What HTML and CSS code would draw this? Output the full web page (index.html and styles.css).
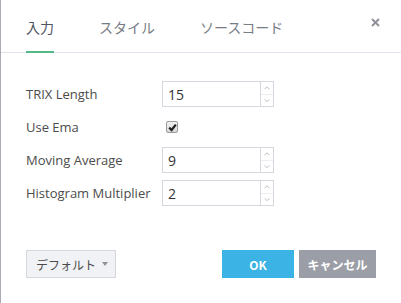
FILE: index.html
```html
<!DOCTYPE html>
<html lang="ja">
<head>
  <meta charset="UTF-8" />
  <meta name="viewport" content="width=device-width, initial-scale=1.0"/>
  <title>TRIX</title>
  <link rel="stylesheet" href="styles.css">
</head>
<body>

<div class="dialog">

  <div class="tabs">
    <div class="tab active">入力</div>
    <div class="tab">スタイル</div>
    <div class="tab">ソースコード</div>
    <div class="close">
      <svg width="9" height="9" viewBox="0 0 9 9">
        <path d="M1 1 L8 8 M8 1 L1 8" stroke="#8f929b" stroke-width="2" fill="none"/>
      </svg>
    </div>
  </div>

  <div class="form">
    <div class="label">TRIX Length</div>
    <div class="spin">
      <span class="value">15</span>
      <span class="arrows">
        <svg width="12" height="12" viewBox="0 0 12 12"><path d="M3.5 7.5 L6 5 L8.5 7.5" stroke="#b8bbc2" fill="none"/></svg>
        <svg width="12" height="12" viewBox="0 0 12 12"><path d="M3.5 4.5 L6 7 L8.5 4.5" stroke="#b8bbc2" fill="none"/></svg>
      </span>
    </div>

    <div class="label">Use Ema</div>
    <div>
      <span class="check">
        <svg width="11" height="11" viewBox="0 0 11 11"><path d="M2.2 5.6 L4.6 8 L8.8 2.6" stroke="#222" stroke-width="2.2" fill="none"/></svg>
      </span>
    </div>

    <div class="label">Moving Average</div>
    <div class="spin">
      <span class="value">9</span>
      <span class="arrows">
        <svg width="12" height="12" viewBox="0 0 12 12"><path d="M3.5 7.5 L6 5 L8.5 7.5" stroke="#b8bbc2" fill="none"/></svg>
        <svg width="12" height="12" viewBox="0 0 12 12"><path d="M3.5 4.5 L6 7 L8.5 4.5" stroke="#b8bbc2" fill="none"/></svg>
      </span>
    </div>

    <div class="label">Histogram Multiplier</div>
    <div class="spin">
      <span class="value">2</span>
      <span class="arrows">
        <svg width="12" height="12" viewBox="0 0 12 12"><path d="M3.5 7.5 L6 5 L8.5 7.5" stroke="#b8bbc2" fill="none"/></svg>
        <svg width="12" height="12" viewBox="0 0 12 12"><path d="M3.5 4.5 L6 7 L8.5 4.5" stroke="#b8bbc2" fill="none"/></svg>
      </span>
    </div>
  </div>

  <div class="footer">
    <button class="btn-default">デフォルト <span class="caret"></span></button>
    <div class="actions">
      <button class="btn-ok">OK</button>
      <button class="btn-cancel">キャンセル</button>
    </div>
  </div>

</div>

</body>
</html>
```

FILE: styles.css
```css
:root {
  --text: #4a4a4a;
  --muted: #787c85;
  --line: #e0e3eb;
  --input-border: #d4d7de;
  --green: #53b987;
  --blue: #3bb3e4;
  --gray: #9b9ea6;
}
* {
  box-sizing: border-box;
}
body {
  margin: 0;
  background: #fff;
  color: var(--text);
  font-family: 'Open Sans', 'Noto Sans CJK JP', sans-serif;
}
.dialog {
  width: 401px;
  height: 303px;
  border-left: 1px solid #a9abb2;
  display: flex;
  flex-direction: column;
}
.tabs {
  display: flex;
  height: 53px;
  padding: 0 21px 0 25px;
  border-bottom: 1px solid var(--line);
}
.tab {
  display: flex;
  align-items: center;
  height: 53px;
  margin-right: 45px;
  padding-top: 1px;
  font-family: 'Noto Sans CJK JP', sans-serif;
  font-size: 14px;
  color: var(--muted);
}
.tab.active {
  color: #4f5460;
  margin-bottom: -1px;
  border-bottom: 2px solid var(--green);
  padding-top: 3px;
}
.close {
  margin-left: auto;
  margin-top: 18px;
  height: 9px;
  line-height: 0;
}
.form {
  display: grid;
  grid-template-columns: 136px 112px;
  grid-auto-rows: 26px;
  row-gap: 7px;
  align-items: center;
  padding: 28px 25px 0;
}
.label {
  font-size: 13px;
  color: #4c4c4c;
}
.spin {
  display: flex;
  height: 26px;
  border: 1px solid var(--input-border);
}
.value {
  flex: 1;
  display: flex;
  align-items: center;
  padding-left: 5px;
  font-size: 14px;
  color: #333;
}
.arrows {
  width: 13px;
  display: flex;
  flex-direction: column;
  border-left: 1px solid var(--input-border);
}
.arrows svg {
  flex: 1;
  width: 12px;
  height: 12px;
}
.arrows svg + svg {
  border-top: 1px solid #eceef2;
}
.check {
  display: block;
  width: 12px;
  height: 12px;
  margin-left: 4px;
  border: 1px solid #9c9c9c;
  border-radius: 2px;
  background: linear-gradient(#f2f2f2, #d8d8d8);
  line-height: 0;
}
.footer {
  display: flex;
  justify-content: space-between;
  padding: 0 25px;
  margin-top: 44px;
}
.actions {
  display: flex;
  gap: 5px;
}
button {
  height: 28px;
  border: none;
  font-family: 'Noto Sans CJK JP', sans-serif;
  font-size: 12px;
  cursor: pointer;
}
.btn-default {
  width: 90px;
  display: flex;
  align-items: center;
  padding: 0 0 0 9px;
  background: #f1f2f5;
  border: 1px solid #d6d8de;
  color: #4a4a4a;
}
.caret {
  margin-left: 6px;
  border-left: 3.5px solid transparent;
  border-right: 3.5px solid transparent;
  border-top: 4px solid #8f929b;
}
.btn-ok {
  width: 72px;
  background: var(--blue);
  color: #fff;
  font-weight: bold;
}
.btn-cancel {
  width: 77px;
  background: var(--gray);
  color: #fff;
  font-weight: bold;
}
```
